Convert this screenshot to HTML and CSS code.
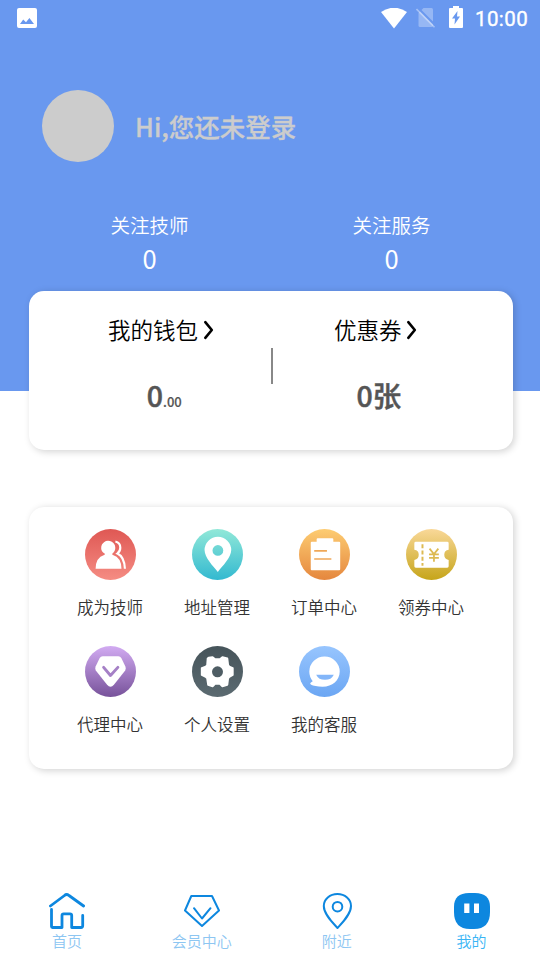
FILE: index.html
```html
<!DOCTYPE html>
<html lang="zh-CN">
<head>
<meta charset="utf-8">
<title>我的</title>
<link rel="stylesheet" href="styles.css">
</head>
<body>
<div class="page">
  <header class="hero">
    <div class="status">
      <svg class="status-photo" width="20" height="20" viewBox="0 0 20 20"><path fill="#fff" fill-rule="evenodd" d="M2 0H18Q20 0 20 2V18Q20 20 18 20H2Q0 20 0 18V2Q0 0 2 0ZM3 16H17L12.400 10L9 14.200L6.200 11.600Z"/></svg>
      <svg width="26" height="21" viewBox="0 0 26 21"><path fill="#fff" d="M0 4Q13-4.600 26 4L13 20.500Z"/></svg>
      <svg class="status-sim" width="20" height="21" viewBox="0 0 20 21"><path fill="#fff" fill-opacity=".3" d="M7.500 0H15.500Q17 0 17 1.500V17.500Q17 19 15.500 19H4Q2.500 19 2.500 17.500V5Z"/><path stroke="#6998ef" stroke-width="2" d="M2 0L20 18"/><path stroke="#fff" stroke-opacity=".4" stroke-width="1.600" d="M.5 1L18.500 19.300"/></svg>
      <svg class="status-battery" width="14" height="22" viewBox="0 0 14 22"><path fill="#fff" fill-rule="evenodd" d="M4 0H10V2H13Q14 2 14 3V21Q14 22 13 22H1Q0 22 0 21V3Q0 2 1 2H4ZM8.500 5L3 12.500H6L5.500 18.500L11 10.500H8Z"/></svg>
      <span class="clock">10:00</span>
    </div>
    <div class="profile"><div class="avatar"></div><div class="greeting">Hi,您还未登录</div></div>
    <div class="stats">
      <div class="stat"><span>关注技师</span><b>0</b></div>
      <div class="stat"><span>关注服务</span><b>0</b></div>
    </div>
  </header>

  <section class="card wallet">
    <div class="wallet-col">
      <div class="wallet-title">我的钱包<svg width="22.500" height="24" viewBox="0 0 22.500 24"><path class="chevron" d="M7.300 4.200L13.800 12L7.300 19.800"/></svg></div>
      <div class="amount">0<small>.00</small></div>
    </div>
    <div class="divider"></div>
    <div class="wallet-col">
      <div class="wallet-title">优惠券<svg width="22.500" height="24" viewBox="0 0 22.500 24"><path class="chevron" d="M7.300 4.200L13.800 12L7.300 19.800"/></svg></div>
      <div class="amount">0张</div>
    </div>
  </section>

  <section class="card menu">
    <div class="item"><svg class="icon" viewBox="0 0 52 52">
      <defs><linearGradient id="red" x2="0" y2="1"><stop stop-color="#df5854"/><stop offset="1" stop-color="#f58c83"/></linearGradient></defs>
      <circle cx="26" cy="26" r="26" fill="url(#red)"/>
      <path fill="#fff" d="M16.500 19.500A7.200 7.200 0 1 1 28 25Q27 26 28.500 26.500Q37 29 37.200 40.500H10.800Q11 29 19.500 26.500Q21 26 20 25Q16.500 23 16.500 19.500Z"/>
      <path fill="none" stroke="#fff" stroke-width="2.200" d="M31 12.800Q36 14 36 19Q36 22.500 33 25Q40 28 40.700 40.500"/></svg><span>成为技师</span></div>
    <div class="item"><svg class="icon" viewBox="0 0 52 52">
      <defs><linearGradient id="teal" x2="0" y2="1"><stop stop-color="#91e8d8"/><stop offset="1" stop-color="#33b9d0"/></linearGradient></defs>
      <circle cx="26" cy="26" r="26" fill="url(#teal)"/>
      <path fill="#fff" fill-rule="evenodd" d="M26.300 43.800C21.500 38 12.800 29 12.800 21.500A13.600 13.600 0 0 1 40 21.500C40 29 31 38 26.300 43.800ZM26.400 16.400A5.500 5.500 0 1 0 26.400 27.400A5.500 5.500 0 0 0 26.400 16.400Z"/></svg><span>地址管理</span></div>
    <div class="item"><svg class="icon" viewBox="0 0 52 52">
      <defs><linearGradient id="orange" x2="0" y2="1"><stop stop-color="#fdcc72"/><stop offset="1" stop-color="#e5873e"/></linearGradient></defs>
      <circle cx="26" cy="26" r="26" fill="url(#orange)"/>
      <path fill="#fff" d="M19 9.500H34Q35 9.500 35 10.500V13H41Q42 13 42 14V41Q42 42 41 42H13Q12 42 12 41V14Q12 13 13 13H18V10.500Q18 9.500 19 9.500Z"/>
      <path stroke="#efa858" stroke-width="1.600" d="M15.500 22.300H28.500M15.500 30.500H33"/></svg><span>订单中心</span></div>
    <div class="item"><svg class="icon" viewBox="0 0 52 52">
      <defs><linearGradient id="gold" x2="0" y2="1"><stop stop-color="#f9d898"/><stop offset="1" stop-color="#c6a51a"/></linearGradient></defs>
      <circle cx="26" cy="26" r="26" fill="url(#gold)"/>
      <path fill="#fff" d="M10 13H42Q43.500 13 43.500 14.500V21.200A5.200 5.200 0 0 0 43.500 31.500V38Q43.500 39.500 42 39.500H10Q8.500 39.500 8.500 38V31.500A5.200 5.200 0 0 0 8.500 21.200V14.500Q8.500 13 10 13Z"/>
      <path fill="none" stroke="#ddba52" stroke-width="2" stroke-dasharray="4 2.400" d="M16.800 15.500V37.500"/>
      <path fill="none" stroke="#ddba52" stroke-width="1.800" d="M24 20L28.500 25.500L33 20M28.500 25V33.500M23.500 25.800H33.500M23.500 29.500H33.500"/></svg><span>领券中心</span></div>
    <div class="item"><svg class="icon" viewBox="0 0 52 52">
      <defs><linearGradient id="purple" x2="0" y2="1"><stop stop-color="#d2abf2"/><stop offset="1" stop-color="#77529a"/></linearGradient></defs>
      <circle cx="26" cy="26" r="26" fill="url(#purple)"/>
      <path fill="#fff" d="M18 10.500H34Q36 10.500 37 12.200L41.200 21Q42 23 41 25L29.500 39.500Q26 43.500 22.500 39.500L11 25Q10 23 10.800 21L15 12.200Q16 10.500 18 10.500Z"/>
      <path fill="none" stroke="#a580c6" stroke-width="3" stroke-linecap="round" stroke-linejoin="round" d="M19 21.800L26 30L33.500 21.800"/></svg><span>代理中心</span></div>
    <div class="item"><svg class="icon" viewBox="0 0 52 52">
      <defs><linearGradient id="slate" x2="0" y2="1"><stop stop-color="#46545a"/><stop offset="1" stop-color="#5b6a71"/></linearGradient></defs>
      <circle cx="26" cy="26" r="26" fill="url(#slate)"/>
      <path fill="#fff" stroke="#fff" stroke-width="2" stroke-linejoin="round" d="M17 12L21 11.500L23.500 13.500H28.500L31 11.500L36 12.800L36.800 19.500L38 21L41.500 22.500V29.500L38 31.500L36.800 33L36 39.500L31 41L28.500 38.500H23.500L21 41L16.500 39.500L15.500 33L14 31.500L10 29.500V22.500L14 21L15.500 19.500L16 12.800Z"/>
      <circle cx="26" cy="26.300" r="5.600" fill="#4e5d64"/></svg><span>个人设置</span></div>
    <div class="item"><svg class="icon" viewBox="0 0 52 52">
      <defs><linearGradient id="blue" x2="0" y2="1"><stop stop-color="#97c5fe"/><stop offset="1" stop-color="#6ba6f3"/></linearGradient></defs>
      <circle cx="26" cy="26" r="26" fill="url(#blue)"/>
      <path fill="#fff" d="M26.200 10.800A15.300 15.300 0 0 1 41.500 26C41.500 35 34 41.500 24 41.500Q16 41.500 12 39.300Q10.500 38 12.500 37L14 36Q10.500 31.500 10.500 26A15.500 15.500 0 0 1 26.200 10.800Z"/>
      <path fill="#83b6f9" d="M17.500 29.200H35.500Q33 34.500 26.500 34.500Q20 34.500 17.500 29.200Z"/></svg><span>我的客服</span></div>
  </section>

  <nav class="tabs">
    <div class="tab"><svg width="36" height="36" viewBox="0 0 36 36"><g fill="none" stroke="#0d87df" stroke-width="2.800" stroke-linecap="round" stroke-linejoin="round"><path d="M1.400 13L15.500 2.500Q17.500 .5 20 2.500L34.600 13"/><path d="M2.500 16.500V33.500Q2.500 34.500 3.500 34.500H13V22.500Q13 20.800 14.700 20.800H21Q22.700 20.800 22.700 22.500V34.500H32Q33.700 34.500 33.700 32.500V22.500"/></g></svg><span>首页</span></div>
    <div class="tab"><svg width="36" height="36" viewBox="0 0 36 36"><g fill="none" stroke="#0d87df" stroke-width="2" stroke-linecap="round" stroke-linejoin="round"><path d="M7.300 3H28L35 17.500L18 33L1 17.500Z"/><path d="M10 15.200L18 25.500L26.500 15.200"/></g></svg><span>会员中心</span></div>
    <div class="tab"><svg width="36" height="36" viewBox="0 0 36 36"><g fill="none" stroke="#0d87df" stroke-width="2"><path stroke-linejoin="round" d="M18.500 35C13 29 4.800 21 4.800 13A13.600 12 0 0 1 32 13C32 21 24 29 18.500 35Z"/><circle cx="18.500" cy="13.700" r="4.800"/></g></svg><span>附近</span></div>
    <div class="tab active"><svg width="36" height="36" viewBox="0 0 36 36"><path fill="#0d87df" d="M15 0H21Q36 0 36 14V19Q36 36 20 36H16Q0 36 0 19V14Q0 0 15 0Z"/><path fill="#fff" d="M10.200 10.500H15.400V20H10.200ZM20 10.500H25V20H20Z"/></svg><span>我的</span></div>
  </nav>
</div>
</body>
</html>
```
FILE: styles.css
```css
* { box-sizing: border-box; }
body { margin: 0; background: #fff; font-family: "Noto Sans CJK SC", sans-serif; font-weight: 350; }
svg { display: block; flex: none; }
.page { width: 540px; height: 960px; display: flex; flex-direction: column; overflow: hidden; }

.hero { height: 391.3px; flex: none; background: #6998ef; color: #fff; }
.status { height: 36px; display: flex; align-items: center; padding: 0 12px 0 17px; }
.status-photo { margin-right: auto; }
.status-sim { margin-left: 9px; }
.status-battery { margin: 0 12px 2px 13px; }
.clock { width: 53px; text-align: right; font: 400 20.5px/36px Roboto, sans-serif; letter-spacing: .4px; padding-top: 2px; -webkit-text-stroke: .4px #fff; }

.profile { display: flex; align-items: center; gap: 21px; padding: 54px 0 0 42px; }
.avatar { width: 72px; height: 72px; border-radius: 50%; background: #ccc; }
.greeting { font-size: 25.5px; line-height: 36px; font-weight: 500; color: #ccc; -webkit-text-stroke: .3px #ccc; }

.stats { display: flex; padding: 48px 27.5px 0 28.5px; }
.stat { flex: 1; display: flex; flex-direction: column; align-items: center; }
.stat span { font-size: 19.5px; line-height: 29px; }
.stat b { font-size: 25.5px; font-weight: 400; line-height: 38px; }

.card { flex: none; margin: 0 27px 0 28.5px; background: #fff; border-radius: 15px; box-shadow: 2px 1.5px 7px rgba(0, 0, 0, .17); }

.wallet { height: 159px; margin-top: -100.3px; padding: 0 27.8px 0 28.5px; display: flex; }
.wallet-col { flex: 1; display: flex; flex-direction: column; align-items: center; padding-top: 21px; }
.wallet-col:first-child { padding-left: 1px; }
.wallet-title { display: flex; align-items: center; height: 35px; font-size: 22.5px; line-height: 31px; color: #000; }
.chevron { fill: none; stroke: #000; stroke-width: 2.6; stroke-linecap: round; stroke-linejoin: round; }
.amount { margin-top: 26px; font-size: 28.5px; line-height: 43px; font-weight: 500; color: #555; -webkit-text-stroke: .5px #555; }
.amount small { font-size: 13px; -webkit-text-stroke-width: .2px; }
.divider { width: 2px; height: 36px; margin-top: 57px; background: #888; }

.menu { height: 262px; margin-top: 57px; padding: 22px 28.5px 0 28px; display: grid; grid-template-columns: repeat(4, 1fr); grid-auto-rows: 117px; }
.item { display: flex; flex-direction: column; align-items: center; }
.icon { width: 51px; height: 51px; }
.item span { margin-top: 14.5px; font-size: 16.5px; line-height: 24px; color: #333; }

.tabs { margin-top: auto; height: 75px; flex: none; display: flex; padding-right: 1px; margin-left: -.5px; }
.tab { flex: 1; display: flex; flex-direction: column; align-items: center; padding-top: 8px; font-size: 15px; line-height: 23px; color: #8dc6f2; }
.tab.active { color: #39b5f5; }
```
